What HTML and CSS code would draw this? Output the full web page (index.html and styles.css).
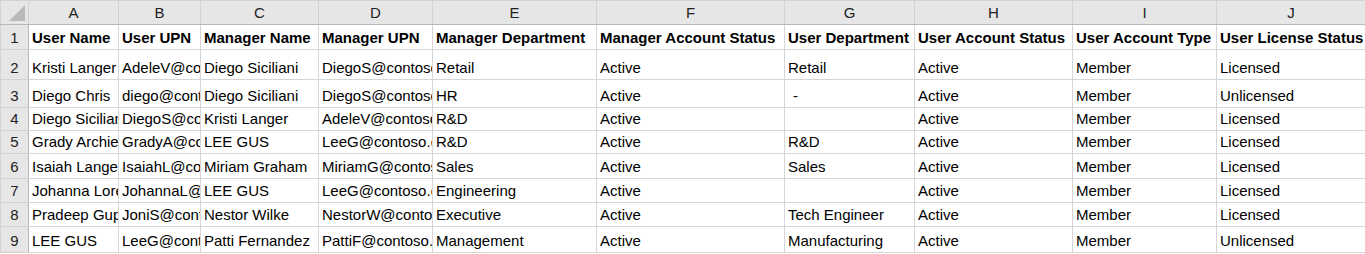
FILE: index.html
```html
<!DOCTYPE html>
<html lang="en">
<head>
    <meta charset="UTF-8">
    <title>Users and Managers</title>
    <link rel="stylesheet" href="styles.css">
</head>
<body>
    <table class="sheet">
        <colgroup>
            <col class="c-row">
            <col class="c-a"><col class="c-b"><col class="c-c"><col class="c-d"><col class="c-e">
            <col class="c-f"><col class="c-g"><col class="c-h"><col class="c-i"><col class="c-j">
        </colgroup>
        <!-- column letters -->
        <tr class="col-head">
            <th class="corner">
                <svg width="16" height="16" viewBox="0 0 16 16"><polygon points="16,0 16,16 0,16" fill="#b9b9b9"/></svg>
            </th>
            <th>A</th><th>B</th><th>C</th><th>D</th><th>E</th>
            <th>F</th><th>G</th><th>H</th><th>I</th><th>J</th>
        </tr>
        <tr class="r1 titles">
            <th class="num">1</th>
            <td>User Name</td><td>User UPN</td><td>Manager Name</td><td>Manager UPN</td>
            <td>Manager Department</td><td>Manager Account Status</td><td>User Department</td>
            <td>User Account Status</td><td>User Account Type</td><td>User License Status</td>
        </tr>
        <tr class="r2">
            <th class="num">2</th>
            <td>Kristi Langer</td><td>AdeleV@contoso.com</td><td>Diego Siciliani</td><td>DiegoS@contoso.com</td>
            <td>Retail</td><td>Active</td><td>Retail</td><td>Active</td><td>Member</td><td>Licensed</td>
        </tr>
        <tr class="r3">
            <th class="num">3</th>
            <td>Diego Chris</td><td>diego@contoso.com</td><td>Diego Siciliani</td><td>DiegoS@contoso.com</td>
            <td>HR</td><td>Active</td><td class="dash">-</td><td>Active</td><td>Member</td><td>Unlicensed</td>
        </tr>
        <tr class="r4">
            <th class="num">4</th>
            <td>Diego Siciliani</td><td>DiegoS@contoso.com</td><td>Kristi Langer</td><td>AdeleV@contoso.com</td>
            <td>R&amp;D</td><td>Active</td><td></td><td>Active</td><td>Member</td><td>Licensed</td>
        </tr>
        <tr class="r5">
            <th class="num">5</th>
            <td>Grady Archie</td><td>GradyA@contoso.com</td><td>LEE GUS</td><td>LeeG@contoso.com</td>
            <td>R&amp;D</td><td>Active</td><td>R&amp;D</td><td>Active</td><td>Member</td><td>Licensed</td>
        </tr>
        <tr class="r6">
            <th class="num">6</th>
            <td>Isaiah Langer</td><td>IsaiahL@contoso.com</td><td>Miriam Graham</td><td>MiriamG@contoso.com</td>
            <td>Sales</td><td>Active</td><td>Sales</td><td>Active</td><td>Member</td><td>Licensed</td>
        </tr>
        <tr class="r7">
            <th class="num">7</th>
            <td>Johanna Lorenz</td><td>JohannaL@contoso.com</td><td>LEE GUS</td><td>LeeG@contoso.com</td>
            <td>Engineering</td><td>Active</td><td></td><td>Active</td><td>Member</td><td>Licensed</td>
        </tr>
        <tr class="r8">
            <th class="num">8</th>
            <td>Pradeep Gupta</td><td>JoniS@contoso.com</td><td>Nestor Wilke</td><td>NestorW@contoso.com</td>
            <td>Executive</td><td>Active</td><td>Tech Engineer</td><td>Active</td><td>Member</td><td>Licensed</td>
        </tr>
        <tr class="r9">
            <th class="num">9</th>
            <td>LEE GUS</td><td>LeeG@contoso.com</td><td>Patti Fernandez</td><td>PattiF@contoso.com</td>
            <td>Management</td><td>Active</td><td>Manufacturing</td><td>Active</td><td>Member</td><td>Unlicensed</td>
        </tr>
    </table>
</body>
</html>
```

FILE: styles.css
```css
* {
    margin: 0;
    padding: 0;
    box-sizing: border-box;
}
body {
    background: white;
    font-family: "Liberation Sans", Arial, sans-serif;
    font-size: 15px;
    color: black;
    overflow: hidden;
}
.sheet {
    border-collapse: collapse;
    table-layout: fixed;
    width: 1365px;
}
/* column widths */
.c-row { width: 28px; }
.c-a { width: 90px; }
.c-b { width: 82px; }
.c-c { width: 118px; }
.c-d { width: 114px; }
.c-e { width: 164px; }
.c-f { width: 188px; }
.c-g { width: 130px; }
.c-h { width: 158px; }
.c-i { width: 144px; }
.c-j { width: 149px; }

td, th {
    border: 1px solid #d6d6d6;
    white-space: nowrap;
    overflow: hidden;
    text-overflow: clip;
    line-height: 18px;
    vertical-align: bottom;
    padding: 0 0 2px 3px;
    text-align: left;
}
/* grey headers */
.col-head th {
    background: #e6e6e6;
    font-weight: normal;
    color: #222;
    text-align: center;
    vertical-align: middle;
    padding: 0;
    border-color: #d2d2d2;
    border-bottom-color: #b8b8b8;
}
.corner {
    text-align: right !important;
    vertical-align: bottom !important;
}
.corner svg {
    display: block;
    margin: 0 3px 3px auto;
}
.num {
    background: #e6e6e6;
    font-weight: normal;
    color: #222;
    text-align: center;
    padding: 0 0 2px 0;
    border-color: #d2d2d2;
    border-right-color: #b8b8b8;
}
.titles td {
    font-weight: bold;
}
.dash {
    padding-left: 8px;
}
/* row heights */
.col-head { height: 24px; }
.r1 { height: 25px; }
.r2 { height: 30px; }
.r3 { height: 28px; }
.r4 { height: 23px; }
.r5 { height: 23px; }
.r6 { height: 25px; }
.r7 { height: 24px; }
.r8 { height: 24px; }
.r9 { height: 26px; }
```
